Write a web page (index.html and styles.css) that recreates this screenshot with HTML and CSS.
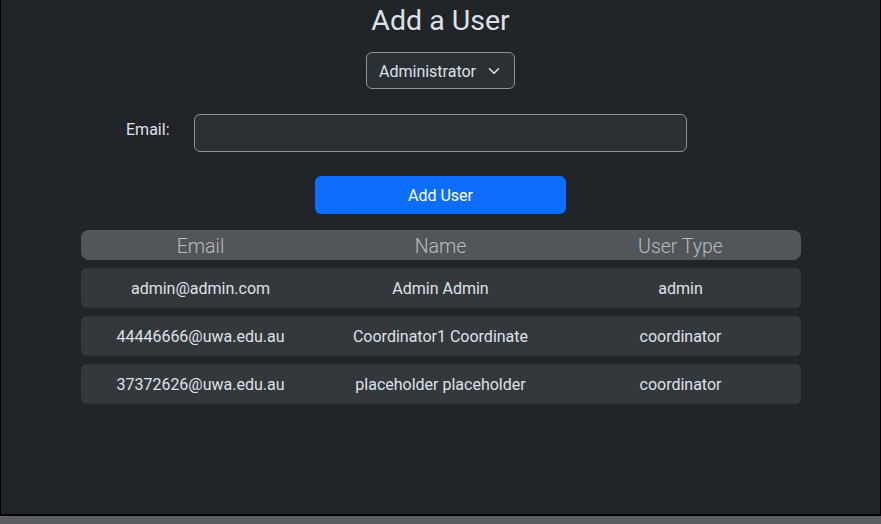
FILE: index.html
```html
<!DOCTYPE html>
<html lang="en">
<head>
<meta charset="utf-8">
<title>Add a User</title>
<link rel="stylesheet" href="styles.css">
</head>
<body>
<div class="page">
  <main class="content">
    <h2 class="title">Add a User</h2>
    <div class="select">
      <span class="select-text">Administrator</span>
      <svg class="chev" width="12" height="8" viewBox="0 0 12 8" aria-hidden="true"><path d="M1.5 1.8 L6 6.2 L10.5 1.8" fill="none" stroke="#dee2e6" stroke-width="1.6" stroke-linecap="round" stroke-linejoin="round"/></svg>
    </div>
    <div class="form-row">
      <label class="label" for="email">Email:</label>
      <input class="input" id="email" type="text">
    </div>
    <button class="btn" type="button">Add User</button>
    <div class="table">
      <div class="thead">
        <div class="cell">Email</div>
        <div class="cell">Name</div>
        <div class="cell">User Type</div>
      </div>
      <div class="row">
        <div class="cell">admin@admin.com</div>
        <div class="cell">Admin Admin</div>
        <div class="cell">admin</div>
      </div>
      <div class="row">
        <div class="cell">44446666@uwa.edu.au</div>
        <div class="cell">Coordinator1 Coordinate</div>
        <div class="cell">coordinator</div>
      </div>
      <div class="row">
        <div class="cell">37372626@uwa.edu.au</div>
        <div class="cell">placeholder placeholder</div>
        <div class="cell">coordinator</div>
      </div>
    </div>
  </main>
  <div class="footer"></div>
</div>
</body>
</html>
```
FILE: styles.css
```css
* { box-sizing: border-box; }
html, body { margin: 0; padding: 0; }
body {
  background: #212529;
  color: #dee2e6;
  font-family: Roboto, "Liberation Sans", sans-serif;
  font-size: 16px;
  line-height: 1.5;
  width: 881px;
  height: 524px;
  overflow: hidden;
}
.page {
  display: flex;
  flex-direction: column;
  height: 524px;
}
.content {
  height: 516px;
  border-left: 1px solid #000;
  border-right: 1px solid #000;
  border-bottom: 2px solid #000;
  display: flex;
  flex-direction: column;
  align-items: center;
}
.footer {
  height: 8px;
  background: #5a5e62;
}
.title {
  margin: 4px 0 0;
  font-size: 28.5px;
  font-weight: 400;
  line-height: 34px;
  color: #dee2e6;
}
.select {
  margin-top: 14px;
  width: 149px;
  height: 37px;
  border: 1px solid #8e9297;
  border-radius: 6px;
  background: #2b3035;
  display: flex;
  align-items: center;
  padding-left: 12px;
  padding-top: 2px;
  position: relative;
}
.select-text { line-height: 24px; }
.chev {
  position: absolute;
  left: 121px;
  top: 14px;
}
.form-row {
  margin-top: 25px;
  width: 720px;
  display: flex;
  align-items: flex-start;
}
.label {
  width: 113px;
  text-align: right;
  padding-right: 24px;
  padding-top: 4px;
  line-height: 24px;
}
.input {
  width: 493px;
  height: 38px;
  border: 1px solid #8e9297;
  border-radius: 6px;
  background: #2b3035;
  color: #dee2e6;
  font: inherit;
  padding: 6px 12px;
  outline: none;
}
.btn {
  margin-top: 24px;
  width: 251px;
  height: 38px;
  border: none;
  border-radius: 6px;
  background: #0d6efd;
  color: #fff;
  font: inherit;
  font-size: 16px;
  line-height: 24px;
  padding: 2px 0 0;
}
.table {
  margin-top: 16px;
  width: 720px;
  display: flex;
  flex-direction: column;
  gap: 8px;
}
.thead, .row {
  display: grid;
  grid-template-columns: 1fr 1fr 1fr;
  align-items: center;
  text-align: center;
}
.thead {
  height: 30px;
  padding-top: 4px;
  background: #52565b;
  border-radius: 8px;
  font-size: 19.5px;
  font-weight: 300;
  color: #b9bcbc;
  line-height: 26px;
}
.row {
  height: 40px;
  padding-top: 2px;
  background: #34383d;
  border-radius: 6px;
  line-height: 24px;
}
```
